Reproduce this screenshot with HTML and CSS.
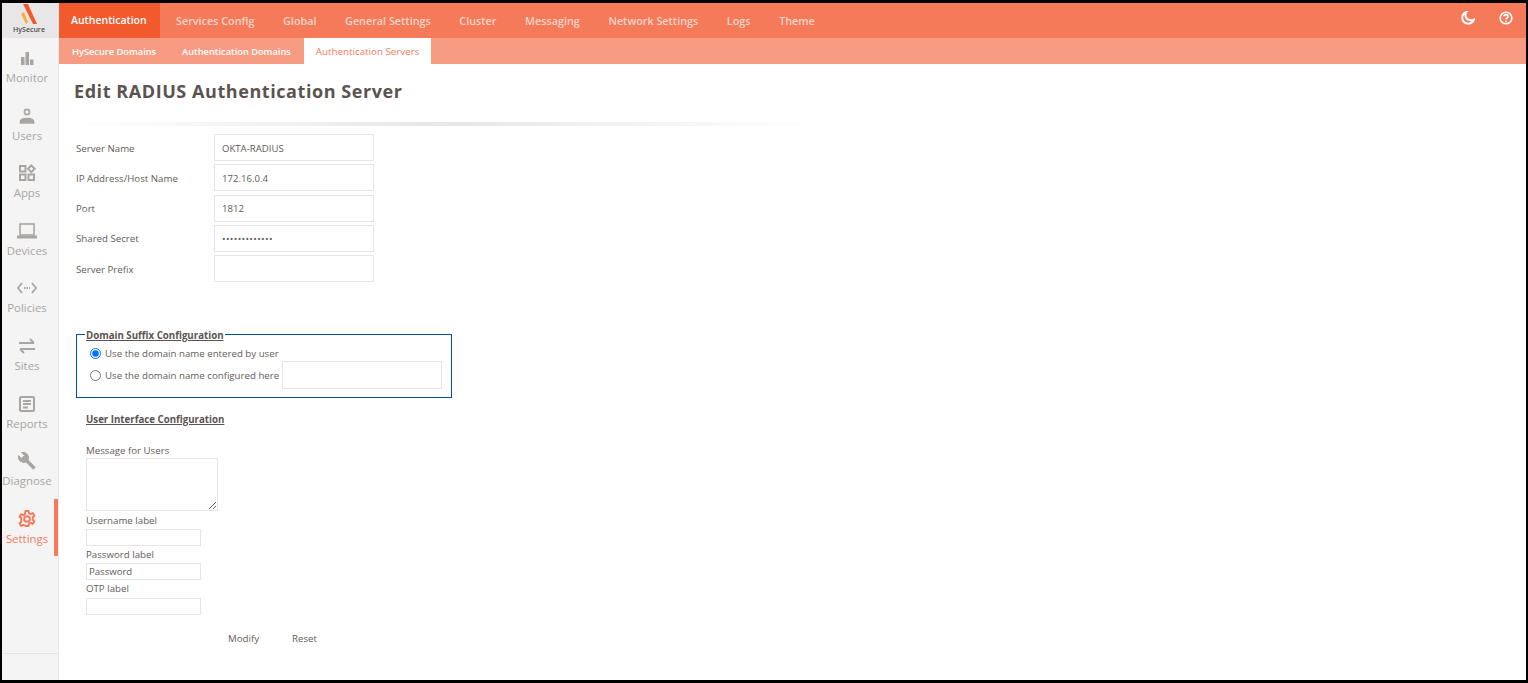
FILE: index.html
```html
<!DOCTYPE html>
<html lang="en">
<head>
<meta charset="utf-8">
<title>Edit RADIUS Authentication Server</title>
<link rel="stylesheet" href="styles.css">
</head>
<body>
<div class="app">
  <aside class="sidebar">
    <div class="logo">
      <svg class="logo-mark" width="24" height="22" viewBox="0 0 24 22"><path d="M6 1h5l9 20h-4z" fill="#f25a2e"/><path d="M4 11l3-2 4 10-2 2z" fill="#f9b233"/></svg>
      <span class="logo-text">HySecure</span>
    </div>
    <nav class="side-nav">
      <a class="side-item"><svg width="20" height="20" viewBox="0 0 20 20"><path d="M4 9h3.500v8H4zM8.500 4H12v13H8.500zM13 11.500h3.500V17H13z" fill="#a9a5a2"/></svg><span>Monitor</span></a>
      <a class="side-item"><svg width="20" height="20" viewBox="0 0 20 20" fill="none" stroke="#a9a5a2" stroke-width="1.600"><circle cx="10" cy="6" r="2.600"/><path d="M3.500 17v-1.500c0-2 3-3 6.500-3s6.500 1 6.500 3V17z" fill="#a9a5a2"/></svg><span>Users</span></a>
      <a class="side-item"><svg width="20" height="20" viewBox="0 0 20 20" fill="none" stroke="#a9a5a2" stroke-width="2"><rect x="3" y="3" width="5.500" height="5.500"/><rect x="3" y="11.500" width="5.500" height="5.500"/><rect x="11.500" y="11.500" width="5.500" height="5.500"/><path d="M14.300 2.500l3.300 3.300-3.300 3.300-3.300-3.300z"/></svg><span>Apps</span></a>
      <a class="side-item"><svg width="22" height="20" viewBox="0 0 22 20" fill="none" stroke="#a9a5a2"><rect x="4" y="3" width="14" height="11" stroke-width="1.600"/><path d="M1 16h20" stroke-width="3"/></svg><span>Devices</span></a>
      <a class="side-item"><svg width="22" height="20" viewBox="0 0 22 20" fill="none" stroke="#a9a5a2" stroke-width="1.800"><path d="M6 5l-4 5 4 5M16 5l4 5-4 5"/><path d="M8 10h6" stroke-dasharray="1.500 1"/></svg><span>Policies</span></a>
      <a class="side-item"><svg width="20" height="20" viewBox="0 0 20 20" fill="none" stroke="#a9a5a2" stroke-width="1.800"><path d="M2 7h15M13 3l4 4M18 13H3M7 17l-4-4"/></svg><span>Sites</span></a>
      <a class="side-item"><svg width="20" height="20" viewBox="0 0 20 20" fill="none" stroke="#a9a5a2" stroke-width="2"><rect x="3" y="3" width="14" height="14" rx="1"/><path d="M6 7h8M6 10h8M6 13.500h5"/></svg><span>Reports</span></a>
      <a class="side-item"><svg width="20" height="20" viewBox="0 0 20 20" fill="none" stroke="#a9a5a2"><path d="M9 9l8.500 8.500" stroke-width="3.600"/><path d="M1.500 4.500a5.500 5.500 0 0 0 7.500 6.500l2-2a5.500 5.500 0 0 0-6.500-7.500l3 3-3 3z" fill="#a9a5a2" stroke-width="1"/></svg><span>Diagnose</span></a>
      <a class="side-item is-active"><svg width="20" height="20" viewBox="0 0 20 20" fill="none" stroke="#f57a59" stroke-width="2"><circle cx="10" cy="10" r="2.800"/><path d="M8.500 2h3l.5 2.300 1.700.8 2.100-1 1.600 2.600-1.700 1.600v2.400l1.700 1.600-1.600 2.600-2.100-1-1.700.8-.5 2.300h-3L8 16.700l-1.700-.8-2.100 1-1.600-2.600 1.700-1.600V9.300L2.600 7.700l1.600-2.600 2.100 1 1.700-.8z" stroke-linejoin="round"/></svg><span>Settings</span></a>
    </nav>
  </aside>
  <div class="main">
    <header class="topbar">
      <nav class="top-nav">
        <a class="top-item is-active">Authentication</a>
        <a class="top-item">Services Config</a>
        <a class="top-item">Global</a>
        <a class="top-item">General Settings</a>
        <a class="top-item">Cluster</a>
        <a class="top-item">Messaging</a>
        <a class="top-item">Network Settings</a>
        <a class="top-item">Logs</a>
        <a class="top-item">Theme</a>
      </nav>
      <div class="top-icons">
        <svg width="14" height="14" viewBox="0 0 14 14"><path d="M5.500 1a6 6 0 1 0 7.500 7.500 5 5 0 0 1-4 .5A5 5 0 0 1 5.500 1z" fill="none" stroke="#fff" stroke-width="2"/></svg>
        <svg width="14" height="14" viewBox="0 0 14 14" fill="none" stroke="#fff" stroke-width="1.600"><circle cx="7" cy="7" r="5.800"/><path d="M5 5.500C5 3 9 3 9 5.500 9 7 7 7 7 8.500"/><path d="M7 9.700v1.500"/></svg>
      </div>
    </header>
    <nav class="sub-nav">
      <a class="sub-item">HySecure Domains</a>
      <a class="sub-item">Authentication Domains</a>
      <a class="sub-item is-active">Authentication Servers</a>
    </nav>
    <main class="content">
      <h1 class="title">Edit RADIUS Authentication Server</h1>
      <div class="rule"></div>
      <div class="server-form">
        <label class="lbl">Server Name</label><input class="field" type="text" value="OKTA-RADIUS">
        <label class="lbl">IP Address/Host Name</label><input class="field" type="text" value="172.16.0.4">
        <label class="lbl">Port</label><input class="field" type="text" value="1812">
        <label class="lbl">Shared Secret</label><input class="field field-secret" type="password" value="abcdefghijklm">
        <label class="lbl">Server Prefix</label><input class="field" type="text" value="">
      </div>
      <fieldset class="suffix">
        <legend class="suffix-legend">Domain Suffix Configuration</legend>
        <label class="radio-row"><input class="radio" type="radio" name="suffix" checked>Use the domain name entered by user</label>
        <label class="radio-row radio-row-two"><input class="radio" type="radio" name="suffix">Use the domain name configured here<input class="domain-field" type="text"></label>
      </fieldset>
      <section class="ui-config">
        <h2 class="ui-title">User Interface Configuration</h2>
        <label class="ui-lbl ui-lbl-first">Message for Users</label>
        <textarea class="ui-area"></textarea>
        <label class="ui-lbl">Username label</label>
        <input class="ui-field" type="text">
        <label class="ui-lbl">Password label</label>
        <input class="ui-field" type="text" value="Password">
        <label class="ui-lbl">OTP label</label>
        <input class="ui-field" type="text">
      </section>
      <div class="actions">
        <a class="action">Modify</a>
        <a class="action">Reset</a>
      </div>
    </main>
  </div>
</div>
</body>
</html>
```
FILE: styles.css
```css
* { box-sizing: border-box; }
html, body { height: 100%; }
body {
  margin: 0;
  background: #000;
  font-family: "Open Sans", "Noto Sans", sans-serif;
  color: #5c5350;
  overflow: hidden;
}
.app {
  display: flex;
  height: 677px;
  margin: 3px 2px 3px 2px;
  background: #fff;
}
.sidebar {
  width: 57px;
  flex: none;
  display: flex;
  flex-direction: column;
  background: #f4f4f4;
  border-right: 1px solid #e8e8e8;
}
.logo {
  height: 35px;
  padding-right: 2px;
  background: #e8e6e6;
  display: flex;
  flex-direction: column;
  align-items: center;
  overflow: hidden;
}
.logo-mark { display: block; flex: none; }
.logo-text { font-size: 7px; line-height: 9px; font-weight: 600; color: #4d4d4d; margin-top: 0; }
.side-nav {
  display: flex;
  flex-direction: column;
  height: 616px;
  border-bottom: 1px solid #e4e4e4;
}
.side-item {
  height: 57.600px;
  flex: none;
  display: flex;
  flex-direction: column;
  align-items: center;
  padding: 10px 6px 0 0;
  font-size: 11.400px;
  line-height: 14px;
  color: #a9a5a2;
  position: relative;
  white-space: nowrap;
}
.side-item svg { display: block; height: 20px; margin-bottom: 3px; }
.side-item.is-active { color: #f57a59; }
.side-item.is-active::after {
  content: "";
  position: absolute;
  right: 0;
  top: 0;
  bottom: 0;
  width: 4px;
  background: #f57a59;
}
.main { flex: 1; min-width: 0; display: flex; flex-direction: column; }
.topbar {
  height: 35px;
  background: #f57a59;
  display: flex;
  justify-content: space-between;
}
.top-nav { display: flex; }
.top-item {
  padding: 0 14.300px;
  font-size: 10.800px;
  line-height: 35px;
  font-weight: 600;
  color: #fcd5c9;
  white-space: nowrap;
}
.top-item.is-active { width: 101px; padding: 0 0 0 12px; font-size: 10.500px; background: #f25a2e; color: #fff; }
.top-item.is-active + .top-item { padding-left: 16px; }
.top-icons { display: flex; gap: 24px; padding: 8px 13px 0 0; }
.sub-nav {
  height: 26px;
  background: #f79c82;
  display: flex;
}
.sub-item {
  padding: 1px 13px 0;
  font-size: 9.250px;
  line-height: 25px;
  font-weight: 600;
  color: #fff;
  white-space: nowrap;
}
.sub-item.is-active { padding: 1px 12px 0; font-size: 9.800px; background: #fff; color: #f57a59; font-weight: 400; }
.content { flex: 1; padding: 0 0 0 15px; }
.title {
  margin: 15px 0 0;
  font-size: 18px;
  line-height: 24px;
  font-weight: 700;
  color: #5c5350;
  letter-spacing: 0.570px;
}
.rule {
  width: 740px;
  height: 4px;
  margin: 19px 0 8px;
  background: linear-gradient(90deg, #fff 0%, #e6e6e6 50%, #fff 100%);
}
.server-form {
  display: grid;
  grid-template-columns: 138px 160px;
  grid-auto-rows: 27px;
  row-gap: 3.250px;
  align-items: center;
  padding-left: 2px;
}
.lbl { font-size: 9.700px; padding-top: 1px; color: #645b58; }
.field {
  width: 160px;
  height: 27px;
  border: 1px solid #e6e6e6;
  padding: 1px 7px 0;
  font: 9.600px "Open Sans", sans-serif;
  color: #645b58;
  outline: none;
}
.field-secret { letter-spacing: 0.300px; }
.suffix {
  width: 376px;
  height: 69px;
  margin: 47px 0 0 2px;
  padding: 5px 0 0 12px;
  border: 1px solid #0051a3;
}
.suffix-legend {
  padding: 2px 1px 0;
  margin-left: -4px;
  font-size: 9.700px;
  line-height: 9px;
  font-weight: 700;
  text-decoration: underline;
  color: #5c5350;
}
.radio-row {
  display: flex;
  align-items: center;
  height: 16px;
  font-size: 9.700px;
  color: #645b58;
  white-space: nowrap;
}
.radio-row-two { height: 28px; }
.radio { width: 11px; height: 11px; margin: 0 4px 0 1px; accent-color: #0075ff; flex: none; }
.domain-field {
  width: 160px;
  height: 28px;
  margin-left: 3px;
  border: 1px solid #e6e6e6;
  outline: none;
}
.ui-config { display: flex; flex-direction: column; align-items: flex-start; padding: 15px 0 0 12px; }
.ui-title {
  margin: 0;
  font-size: 9.700px;
  line-height: 14px;
  font-weight: 700;
  text-decoration: underline;
  color: #5c5350;
}
.ui-lbl { font-size: 9.700px; line-height: 17.200px; color: #645b58; display: block; }
.ui-lbl-first { margin-top: 17px; line-height: 14px; }
.ui-area {
  display: block;
  width: 132px;
  height: 53px;
  margin: 0 0 1px;
  border: 1px solid #e6e6e6;
  outline: none;
}
.ui-field {
  width: 115px;
  height: 17px;
  border: 1px solid #e6e6e6;
  padding: 0 2px;
  font: 9.600px "Open Sans", sans-serif;
  color: #645b58;
  outline: none;
}
.actions { display: flex; gap: 33px; padding: 17.500px 0 0 154px; }
.action { font-size: 9.700px; line-height: 14px; color: #645b58; }
```
